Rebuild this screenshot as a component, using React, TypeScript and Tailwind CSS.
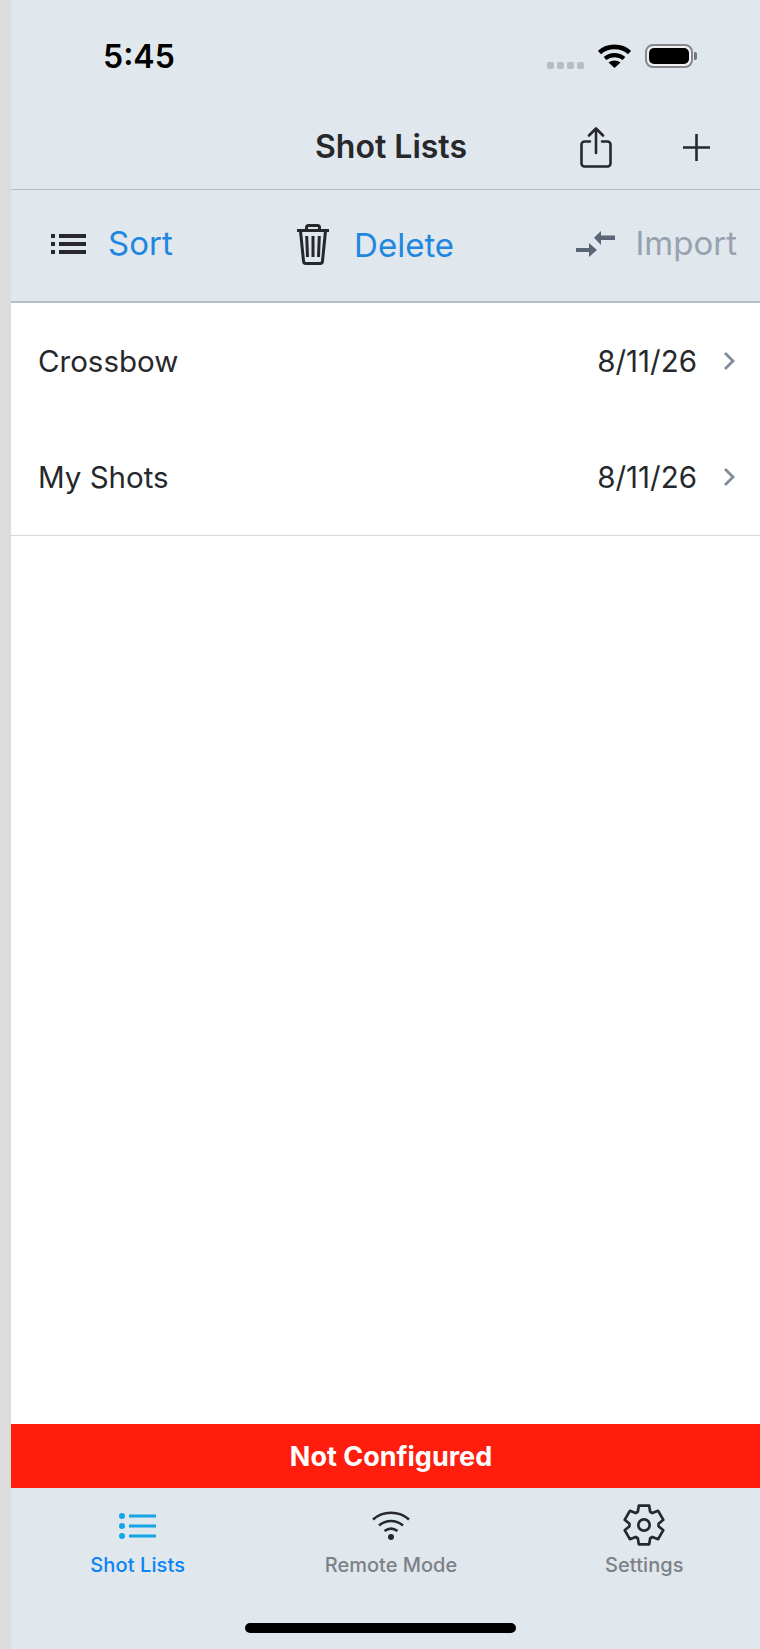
const font = "font-['Inter',sans-serif]";

function gearPath() {
  const cx = 21;
  const cy = 21;
  const pts: string[] = [];
  for (let k = 0; k < 6; k++) {
    const a = -90 + 60 * k;
    const list: [number, number][] = [
      [a - 25, 14.6],
      [a - 15, 20],
      [a + 15, 20],
      [a + 25, 14.6],
    ];
    for (const [deg, r] of list) {
      const t = (deg * Math.PI) / 180;
      pts.push(`${(cx + r * Math.cos(t)).toFixed(2)} ${(cy + r * Math.sin(t)).toFixed(2)}`);
    }
  }
  return `M${pts.join("L")}Z`;
}

function ChevronRow({ name }: { name: string }) {
  return (
    <div className="flex h-[116px] items-center justify-between pl-[27px] pr-[36px]">
      <span className="text-[29.500px] text-[#26282b]">{name}</span>
      <div className="flex items-center gap-[26px]">
        <span className="text-[29.500px] text-[#26282b]">8/11/26</span>
        <svg viewBox="0 0 12 20" className="h-[20px] w-[12px]" fill="none" stroke="#7f8c9a" strokeWidth="2.800">
          <path d="M2 2l8 8-8 8" />
        </svg>
      </div>
    </div>
  );
}

export default function App() {
  return (
    <div className={`flex h-[1649px] w-[760px] overflow-hidden bg-white ${font}`}>
      <div className="w-[11px] shrink-0 bg-[#dcdcdc]" />
      <div className="flex w-[760px] shrink-0 flex-col">
        <header className="bg-[#e0e7ed]">
          <div className="flex h-[114px] items-start justify-between pl-[92px] pr-[74px] pt-[38px]">
            <span className="text-[32px] leading-[37px] font-semibold text-black">5:45</span>
            <div className="flex items-start pt-[6px]">
              <div className="mt-[18px] mr-[14px] flex gap-[3px]">
                <i className="block h-[7px] w-[7px] rounded-[2px] bg-[#b9bcc0]" />
                <i className="block h-[7px] w-[7px] rounded-[2px] bg-[#b9bcc0]" />
                <i className="block h-[7px] w-[7px] rounded-[2px] bg-[#b9bcc0]" />
                <i className="block h-[7px] w-[7px] rounded-[2px] bg-[#b9bcc0]" />
              </div>
              <svg viewBox="0 0 33 24" className="h-[24px] w-[33px] text-black" fill="none" stroke="currentColor">
                <path d="M1.500 8.500C9.500 1 23.500 1 31.500 8.500" strokeWidth="4.600" />
                <path d="M7 14.500c5.500-4.600 13.500-4.600 19 0" strokeWidth="4.200" />
                <path d="M16.500 24l-6-5.500c3.400-2.800 8.600-2.800 12 0z" fill="currentColor" stroke="none" />
              </svg>
              <div className="ml-[14px] flex items-center">
                <div className="flex h-[24px] w-[48px] rounded-[8px] border-2 border-[#85888c] bg-[#eef0f2] p-[2px]">
                  <div className="flex-1 rounded-[5px] bg-black" />
                </div>
                <div className="ml-[1px] h-[8px] w-[3px] rounded-r-[2px] bg-[#777]" />
              </div>
            </div>
          </div>
          <div className="relative flex h-[76px] items-center justify-center border-b border-[#b8bec9] pb-[9px]">
            <span className="text-[32px] font-semibold text-[#26282b]">Shot Lists</span>
            <div className="absolute top-[13px] right-[61px] flex items-center gap-[71px]">
              <svg viewBox="0 0 32 41" className="h-[41px] w-[32px]" fill="none" stroke="#26282b" strokeWidth="2.600" strokeLinecap="round" strokeLinejoin="round">
                <path d="M16 26V2M9 8.500L16 1.500l7 7" />
                <path d="M10 14.500H4.500a3 3 0 0 0-3 3V36.500a3 3 0 0 0 3 3h23a3 3 0 0 0 3-3V17.500a3 3 0 0 0-3-3H22" />
              </svg>
              <svg viewBox="0 0 27 27" className="h-[27px] w-[27px]" stroke="#26282b" strokeWidth="2.600">
                <path d="M13.500 0v27M0 13.500h27" />
              </svg>
            </div>
          </div>
          <div className="flex h-[113px] items-center justify-between border-b-2 border-[#b8bec9] pl-[40px] pr-[34px] pb-[3px]">
            <div className="flex items-center gap-[22px]">
              <svg viewBox="0 0 35 20" className="h-[20px] w-[35px]" fill="#26282b">
                <rect x="0" y="0" width="4" height="4" />
                <rect x="0" y="8" width="4" height="4" />
                <rect x="0" y="16" width="4" height="4" />
                <rect x="8" y="0" width="27" height="4" />
                <rect x="8" y="8" width="27" height="4" />
                <rect x="8" y="16" width="27" height="4" />
              </svg>
              <span className="text-[33px] text-[#1f87e0]">Sort</span>
            </div>
            <div className="ml-[2px] flex items-center gap-[25px]">
              <svg viewBox="0 0 32 41" className="h-[41px] w-[32px]" fill="none" stroke="#26282b" strokeWidth="3" strokeLinejoin="round">
                <path d="M0 6.500h32M9.500 6V3.500a2 2 0 0 1 2-2h9a2 2 0 0 1 2 2V6" />
                <path d="M3.500 7l3 30a2.500 2.500 0 0 0 2.500 2.500h14a2.500 2.500 0 0 0 2.500-2.500l3-30" />
                <path d="M9.700 12l.8 21M16 12v21M22.300 12l-.8 21" />
              </svg>
              <span className="mt-[3px] text-[33px] text-[#1f87e0]">Delete</span>
            </div>
            <div className="flex items-center gap-[20px]">
              <svg viewBox="0 0 39 26" className="h-[26px] w-[39px]" fill="#5a6675">
                <path d="M18 6.700L25 0v4.500h14V9H25v5z" />
                <path d="M0 17h13v-5l8 7-8 7v-5H0z" />
              </svg>
              <span className="text-[33px] text-[#98a2ae]">Import</span>
            </div>
          </div>
        </header>
        <main className="flex-1 bg-white">
          <div className="border-b border-[#d5d8de]">
            <ChevronRow name="Crossbow" />
            <ChevronRow name="My Shots" />
          </div>
        </main>
        <div className="flex h-[64px] items-center justify-center bg-[#ff1d0d] pt-[2px] text-[27px] font-bold text-white">
          Not Configured
        </div>
        <nav className="flex h-[161px] flex-col bg-[#e0e7ed]">
          <div className="grid w-[760px] grid-cols-3 pt-[16px]">
            <div className="flex flex-col items-center">
              <svg viewBox="0 0 38 28" className="h-[42px] w-[38px]" fill="#14a5e6">
                <circle cx="3" cy="5" r="3" />
                <circle cx="3" cy="15" r="3" />
                <circle cx="3" cy="25" r="3" />
                <rect x="10" y="3.500" width="27" height="3" />
                <rect x="10" y="13.500" width="27" height="3" />
                <rect x="10" y="23.500" width="27" height="3" />
              </svg>
              <span className="mt-[4px] text-[20px] tracking-[0.1px] font-medium text-[#0b84f5]">Shot Lists</span>
            </div>
            <div className="flex flex-col items-center">
              <svg viewBox="0 0 38 30" className="h-[42px] w-[38px]" fill="none" stroke="#26282b" strokeWidth="2.600">
                <path d="M1 9.500c10-9 26-9 36 0M7 15.500c7-6 17-6 24 0M12.500 21c4-3 9-3 13 0" />
                <circle cx="19" cy="27" r="3" fill="#26282b" stroke="none" />
              </svg>
              <span className="mt-[4px] text-[20px] font-medium text-[#7d8186]">Remote Mode</span>
            </div>
            <div className="flex flex-col items-center">
              <svg viewBox="0 0 42 42" className="h-[42px] w-[42px] overflow-visible" fill="none" stroke="#26282b" strokeWidth="2.700" strokeLinejoin="round">
                <path d={gearPath()} />
                <circle cx="21" cy="21" r="5.700" />
              </svg>
              <span className="mt-[4px] text-[20px] tracking-[0.1px] font-medium text-[#7d8186]">Settings</span>
            </div>
          </div>
          <div className="mt-auto mb-[16px] ml-[234px] h-[10px] w-[271px] rounded-full bg-black" />
        </nav>
      </div>
    </div>
  );
}
